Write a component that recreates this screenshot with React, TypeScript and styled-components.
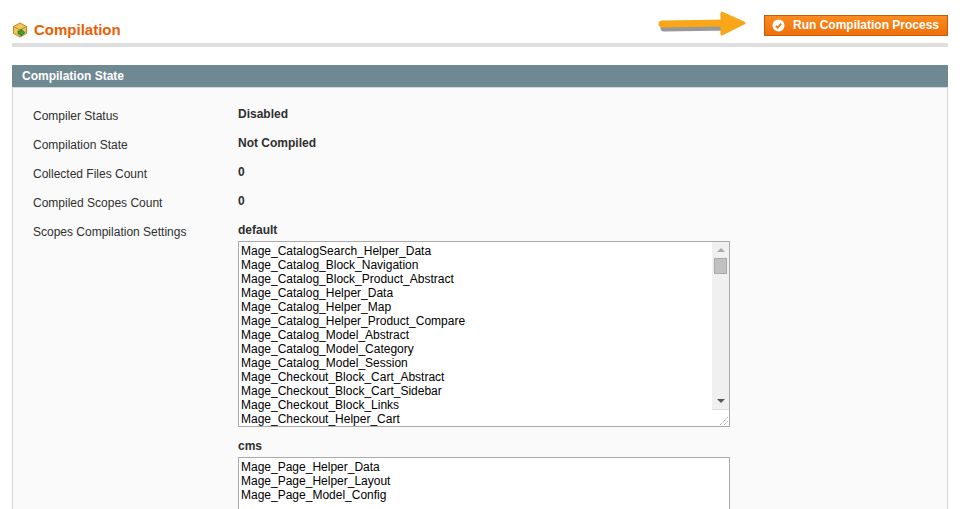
import styled, { createGlobalStyle } from 'styled-components';

const Global = createGlobalStyle`
  html, body { margin: 0; padding: 0; background: #fff; }
  body { font-family: Arial, "Liberation Sans", sans-serif; font-size: 12px; color: #2f2f2f; }
`;

const Page = styled.div`
  padding: 0 12px;
  width: 936px;
`;

const Head = styled.div`
  display: flex;
  align-items: flex-end;
  justify-content: space-between;
  height: 47px;
  border-bottom: 4px solid #dfdfdf;
  box-sizing: border-box;
  padding-bottom: 5px;
`;

const Title = styled.h3`
  display: flex;
  align-items: center;
  gap: 6px;
  margin: 0;
  font-size: 15px;
  font-weight: bold;
  color: #eb5e00;
`;

const Right = styled.div`
  display: flex;
  align-items: center;
  gap: 14px;
  align-self: flex-start;
  padding-top: 10px;
`;

const Button = styled.button`
  display: flex;
  align-items: center;
  gap: 8px;
  height: 21px;
  padding: 0 8px 0 7px;
  border: 1px solid #c55b0a;
  background: linear-gradient(#fb8c1f, #f06f0a);
  color: #fff;
  font: bold 12px Arial, "Liberation Sans", sans-serif;
`;

const Section = styled.div`
  margin-top: 18px;
`;

const Bar = styled.div`
  background: #6f8992;
  color: #fff;
  font-weight: bold;
  padding: 4px 10px;
  height: 14px;
  line-height: 14px;
  border-bottom: 1px solid #d6d6d6;
`;

const Body = styled.div`
  background: #fafafa;
  border: 1px solid #d6d6d6;
  border-top: none;
  padding: 19px 20px 0;
  height: 500px;
`;

const Row = styled.div`
  display: flex;
  min-height: 29px;
`;

const Label = styled.div`
  width: 205px;
  padding-top: 2px;
`;

const Value = styled.div`
  font-weight: bold;
`;

const ListWrap = styled.div`
  margin-top: 4px;
  margin-bottom: 12px;
  width: 490px;
  height: 184px;
  border: 1px solid #aaa;
  background: #fff;
  display: flex;
`;

const Lines = styled.div`
  flex: 1;
  padding: 2px 2px;
  font-weight: normal;
  line-height: 14px;
  color: #000;
  overflow: hidden;
`;

const Scroll = styled.div`
  width: 17px;
  background: #f0f0f0;
  display: flex;
  flex-direction: column;
  align-items: center;
`;

const Arrow = styled.div<{ $down?: boolean }>`
  width: 0; height: 0;
  margin: 6px 0;
  border-left: 4px solid transparent;
  border-right: 4px solid transparent;
  ${p => p.$down ? 'border-top: 4px solid #555;' : 'border-bottom: 4px solid #aaa;'}
`;

const Thumb = styled.div`
  width: 13px;
  height: 16px;
  background: #c1c1c1;
  border: 1px solid #a8a8a8;
  box-sizing: border-box;
`;

const Grip = styled.div`
  width: 17px;
  height: 17px;
  background: #fff;
  border-top: 1px solid #ddd;
  box-sizing: border-box;
  display: flex;
  align-items: flex-end;
  justify-content: flex-end;
`;

const Fill = styled.div`flex: 1;`;

const defaults = [
  'Mage_CatalogSearch_Helper_Data', 'Mage_Catalog_Block_Navigation', 'Mage_Catalog_Block_Product_Abstract',
  'Mage_Catalog_Helper_Data', 'Mage_Catalog_Helper_Map', 'Mage_Catalog_Helper_Product_Compare',
  'Mage_Catalog_Model_Abstract', 'Mage_Catalog_Model_Category', 'Mage_Catalog_Model_Session',
  'Mage_Checkout_Block_Cart_Abstract', 'Mage_Checkout_Block_Cart_Sidebar', 'Mage_Checkout_Block_Links',
  'Mage_Checkout_Helper_Cart',
];
const cms = ['Mage_Page_Helper_Data', 'Mage_Page_Helper_Layout', 'Mage_Page_Model_Config'];

const List = ({ items, scroll }: { items: string[]; scroll?: boolean }) => (
  <ListWrap>
    <Lines>{items.map(i => <div key={i}>{i}</div>)}</Lines>
    {scroll && (
      <Scroll>
        <Arrow />
        <Thumb />
        <Fill />
        <Arrow $down />
        <Grip>
          <svg width="12" height="12"><path d="M3 11L11 3M7 11L11 7" stroke="#888" strokeDasharray="1 1" /></svg>
        </Grip>
      </Scroll>
    )}
  </ListWrap>
);

export default function App() {
  return (
    <Page>
      <Global />
      <Head>
        <Title>
          <svg width="16" height="16" viewBox="0 0 16 16">
            <path d="M8 1L14.5 4.5V11.5L8 15L1.5 11.5V4.5Z" fill="#f2c45a" stroke="#b98a2a" />
            <path d="M1.5 4.5L8 8L14.5 4.5M8 8V15" stroke="#b98a2a" fill="none" />
            <path d="M6 9H9V7L13 10.5L9 14V12H6Z" fill="#3aa535" stroke="#1f6e1e" strokeWidth="0.7" />
          </svg>
          Compilation
        </Title>
        <Right>
          <svg width="92" height="30" viewBox="0 0 92 30">
            <path d="M4 15L70 14" stroke="#333" strokeWidth="7" strokeLinecap="round" opacity="0.5" transform="translate(2,3)" />
            <path d="M4 14L70 13" stroke="#f9a61a" strokeWidth="7" strokeLinecap="round" />
            <path d="M64 3L86 13L64 24Z" fill="#f9a61a" stroke="#f9a61a" strokeLinejoin="round" strokeWidth="3" />
          </svg>
          <Button>
            <svg width="13" height="13" viewBox="0 0 13 13">
              <circle cx="6.5" cy="6.5" r="6" fill="#fff" />
              <path d="M3.8 6.8L5.7 8.6L9.2 4.6" stroke="#f07a10" strokeWidth="1.8" fill="none" />
            </svg>
            Run Compilation Process
          </Button>
        </Right>
      </Head>
      <Section>
        <Bar>Compilation State</Bar>
        <Body>
          <Row><Label>Compiler Status</Label><Value>Disabled</Value></Row>
          <Row><Label>Compilation State</Label><Value>Not Compiled</Value></Row>
          <Row><Label>Collected Files Count</Label><Value>0</Value></Row>
          <Row><Label>Compiled Scopes Count</Label><Value>0</Value></Row>
          <Row>
            <Label>Scopes Compilation Settings</Label>
            <Value>
              default
              <List items={defaults} scroll />
              cms
              <List items={cms} />
            </Value>
          </Row>
        </Body>
      </Section>
    </Page>
  );
}
